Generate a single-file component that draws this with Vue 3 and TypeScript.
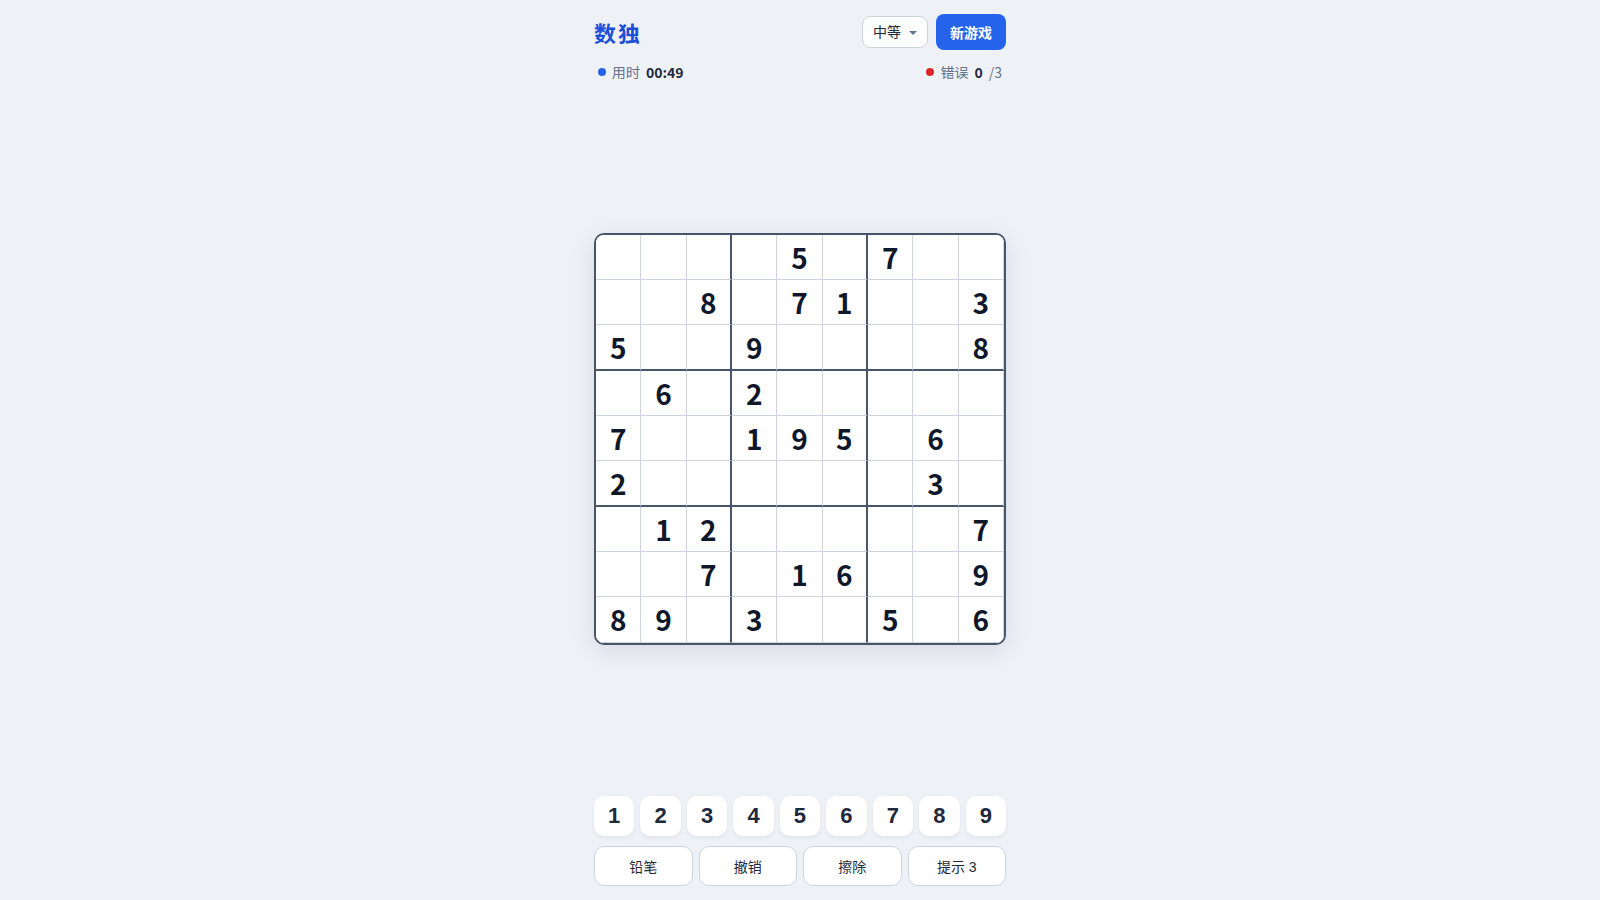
<script setup lang="ts">
import { computed, onMounted, onUnmounted, ref } from 'vue'

type Level = 'easy' | 'medium' | 'hard'

const puzzle = [
  '000050700',
  '008071003',
  '500900008',
  '060200000',
  '700195060',
  '200000030',
  '012000007',
  '007016009',
  '890300506',
]

const parse = (): number[] => puzzle.join('').split('').map(Number)

const given = parse().map((n) => n > 0)
const cells = ref<number[]>(parse())
const selected = ref<number | null>(null)
const history = ref<{ index: number; value: number }[]>([])
const level = ref<Level>('medium')
const seconds = ref(49)
const mistakes = ref(0)
const hints = ref(3)
const pencil = ref(false)
const started = ref(false)
let timer: number | undefined

const clock = computed(() => {
  const m = String(Math.floor(seconds.value / 60)).padStart(2, '0')
  const s = String(seconds.value % 60).padStart(2, '0')
  return `${m}:${s}`
})

function select(index: number) {
  selected.value = index
  started.value = true
}

function enter(value: number) {
  const i = selected.value
  if (i === null || given[i]) return
  history.value.push({ index: i, value: cells.value[i] })
  cells.value[i] = value
}

function undo() {
  const last = history.value.pop()
  if (last) cells.value[last.index] = last.value
}

function newGame() {
  cells.value = parse()
  history.value = []
  selected.value = null
  seconds.value = 0
  mistakes.value = 0
  hints.value = 3
  started.value = true
}

function hint() {
  if (hints.value > 0 && selected.value !== null) hints.value--
}

onMounted(() => {
  timer = window.setInterval(() => {
    if (started.value) seconds.value++
  }, 1000)
})
onUnmounted(() => window.clearInterval(timer))
</script>

<template>
  <main class="app" lang="zh-CN">
    <header class="header">
      <h1 class="title">数独</h1>
      <div class="controls">
        <div class="picker">
          <select v-model="level" class="level" aria-label="难度">
            <option value="easy">简单</option>
            <option value="medium">中等</option>
            <option value="hard">困难</option>
          </select>
          <svg class="caret" viewBox="0 0 8 4" aria-hidden="true"><path d="M0 0h8L4 4z" fill="#64748b" /></svg>
        </div>
        <button class="new-game" type="button" @click="newGame">新游戏</button>
      </div>
    </header>

    <div class="meta">
      <div class="stat">
        <span class="dot"></span>
        <span>用时</span>
        <strong>{{ clock }}</strong>
      </div>
      <div class="stat">
        <span class="dot dot-error"></span>
        <span>错误</span>
        <strong>{{ mistakes }}</strong>
        <span>/3</span>
      </div>
    </div>

    <section class="stage">
      <div class="board">
        <button
          v-for="(value, i) in cells"
          :key="i"
          type="button"
          class="cell"
          :class="{
            'box-right': i % 9 === 2 || i % 9 === 5,
            'box-bottom': Math.floor(i / 9) === 2 || Math.floor(i / 9) === 5,
            given: given[i],
            selected: selected === i,
          }"
          :aria-label="`第${Math.floor(i / 9) + 1}行第${(i % 9) + 1}列`"
          @click="select(i)"
        >{{ value || '' }}</button>
      </div>
    </section>

    <div class="pad">
      <div class="keys">
        <button v-for="n in 9" :key="n" class="key" type="button" @click="enter(n)">{{ n }}</button>
      </div>
      <div class="actions">
        <button class="action" type="button" :aria-pressed="pencil" @click="pencil = !pencil">铅笔</button>
        <button class="action" type="button" @click="undo">撤销</button>
        <button class="action" type="button" @click="enter(0)">擦除</button>
        <button class="action" type="button" @click="hint">提示 {{ hints }}</button>
      </div>
    </div>
  </main>
</template>

<style>
body {
  margin: 0;
  background: #eef2f7;
}
</style>

<style scoped>
.app {
  box-sizing: border-box;
  display: flex;
  flex-direction: column;
  gap: 10px;
  max-width: 440px;
  min-height: 100vh;
  margin: 0 auto;
  padding: 14px;
  color: #1e293b;
  font-family: "Noto Sans SC", "Noto Sans CJK SC", sans-serif;
  font-size: 14px;
}

button,
select {
  box-sizing: border-box;
  margin: 0;
  font-family: "Liberation Sans", "Noto Sans CJK SC", sans-serif;
  color: inherit;
  cursor: pointer;
}

.header,
.controls,
.meta,
.stat {
  display: flex;
  align-items: center;
}

.header,
.meta {
  justify-content: space-between;
}

.title {
  margin: 0;
  color: #1d4ed8;
  font-size: 22px;
  font-weight: 700;
  letter-spacing: 2px;
}

.controls {
  gap: 8px;
}

.picker {
  position: relative;
}

.level {
  display: block;
  height: 32px;
  padding: 0 26px 0 10px;
  border: 1px solid #cbd5e1;
  border-radius: 8px;
  background: #fff;
  font-size: 14px;
  appearance: none;
}

.caret {
  position: absolute;
  top: 15px;
  right: 11px;
  width: 8px;
  height: 4px;
  pointer-events: none;
}

.new-game {
  height: 36px;
  padding: 0 14px;
  border: 0;
  border-radius: 8px;
  background: #2563eb;
  color: #fff;
  font-size: 14px;
  font-weight: 700;
}

.meta {
  padding: 2px 4px 0;
  color: #64748b;
  line-height: 1.45;
}

.stat {
  gap: 6px;
}

.stat strong {
  color: #1e293b;
}

.dot {
  width: 8px;
  height: 8px;
  border-radius: 50%;
  background: #2563eb;
}

.dot-error {
  background: #dc2626;
}

.stage {
  display: flex;
  flex: 1;
  align-items: center;
  padding-bottom: 1px;
}

.board {
  box-sizing: border-box;
  display: grid;
  grid-template-columns: repeat(9, minmax(0, 1fr));
  grid-template-rows: repeat(9, minmax(0, 1fr));
  width: 100%;
  aspect-ratio: 1;
  overflow: hidden;
  border: 2px solid #475569;
  border-radius: 10px;
  background: #fff;
  box-shadow: 0 6px 24px rgba(15, 23, 42, 0.1);
}

.cell {
  display: flex;
  align-items: center;
  justify-content: center;
  padding: 0;
  border: 0 solid #cbd5e1;
  border-right-width: 1px;
  border-bottom-width: 1px;
  background: #fff;
  color: #2563eb;
  font-family: "Noto Sans SC", "Noto Sans CJK SC", sans-serif;
  font-size: 28px;
  line-height: 1;
}

.box-right {
  border-right: 2px solid #475569;
}

.box-bottom {
  border-bottom: 2px solid #475569;
}

.given {
  color: #0f172a;
  font-weight: 700;
}

.selected {
  background: #dbeafe;
}

.pad {
  display: grid;
  gap: 10px;
}

.keys,
.actions {
  display: grid;
  gap: 6px;
}

.keys {
  grid-template-columns: repeat(9, 1fr);
}

.actions {
  grid-template-columns: repeat(4, 1fr);
}

.key,
.action {
  height: 40px;
  padding: 0;
  border-radius: 10px;
  background: #fff;
}

.key {
  border: 0;
  box-shadow: 0 2px 4px rgba(15, 23, 42, 0.06);
  font-size: 22px;
  font-weight: 700;
}

.action {
  border: 1px solid #cbd5e1;
  font-size: 14px;
}
</style>
